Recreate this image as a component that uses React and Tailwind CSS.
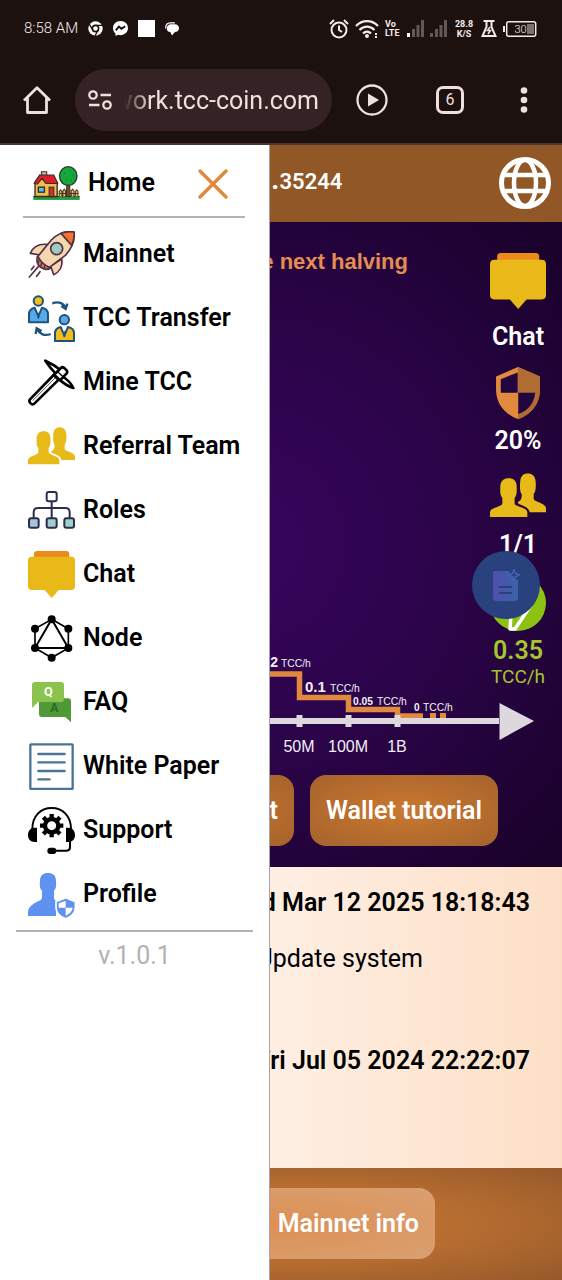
import React from "react";

function HouseIcon() {
  return (
    <svg viewBox="0 0 140 102" className="w-[47px] shrink-0" aria-hidden="true">
      <rect x="1" y="91" width="138" height="10" fill="#1f9a3c" />
      <path d="M1 91h138" stroke="#3b2a22" strokeWidth="3" />
      <path d="M78 91V76l4-5 4 5v15M89 91V74l4-5 4 5v17M114 91V74l4-5 4 5v17M126 91V76l4-5 4 5v15M76 82h60" fill="#f0c25a" stroke="#4a3425" strokeWidth="3" />
      <path d="M99 91l2-38h8l2 38z" fill="#7b4a2a" stroke="#3b2a22" strokeWidth="3" />
      <ellipse cx="105" cy="30" rx="26" ry="28" fill="#16a83a" stroke="#2b3a2b" strokeWidth="4" />
      <path d="M93 20l3 3M108 14l3 3M118 28l3 3M98 38l3 3M112 42l2 3" stroke="#0d7a2c" strokeWidth="3" />
      <path d="M6 91V48l14-20 16 20h36v43z" fill="#ecc04e" stroke="#3b2a22" strokeWidth="4" />
      <path d="M25 32V17h16v15" fill="#b8b8b8" stroke="#3b2a22" strokeWidth="3" />
      <path d="M3 52l17-25h42l12 25H38L27 37 13 54z" fill="#dc1f26" stroke="#3b2a22" strokeWidth="3" strokeLinejoin="round" />
      <rect x="16" y="63" width="18" height="15" fill="#5cb8f0" stroke="#3b2a22" strokeWidth="4" />
      <rect x="48" y="63" width="14" height="28" fill="#c93430" stroke="#3b2a22" strokeWidth="3" />
    </svg>
  );
}

function RocketIcon() {
  return (
    <svg viewBox="0 0 141 141" className="size-[47px] shrink-0" aria-hidden="true" fill="none" stroke="#55304a" strokeWidth="5" strokeLinejoin="round" strokeLinecap="round">
      <path d="M58 40C36 38 16 44 7 67l30 5z" fill="#f3d7ae" />
      <path d="M101 84c4 24-8 40-24 47l-9-26z" fill="#f3d7ae" />
      <path d="M28 76c-4 16 2 28 12 34 8 6 20 7 27 2L62 98z" fill="#cf7a4a" />
      <path d="M35 84l-6 14M43 90l-6 18M52 96l-4 18M61 102l-1 12" strokeWidth="4" />
      <path d="M138 3C112 0 88 8 70 27L30 76c6 14 18 26 34 33l48-36c20-20 29-40 26-70z" fill="#f3d7ae" />
      <path d="M138 3c-14-2-27-1-39 4l32 36c6-13 9-26 7-40z" fill="#f5742a" />
      <circle cx="86" cy="53" r="18" fill="#9ccbc2" />
      <path d="M18 106l-8 10M31 107L4 138M36 122L26 136" strokeWidth="5" />
    </svg>
  );
}

function TransferIcon() {
  return (
    <svg viewBox="0 0 141 141" className="size-[47px] shrink-0" aria-hidden="true" fill="none" stroke="#1f537d" strokeWidth="6" strokeLinejoin="round" strokeLinecap="round">
      <circle cx="31" cy="18" r="14" fill="#f3bd1c" />
      <path d="M3 82V58c0-13 8-18 17-20l11 26 11-26c10 2 18 7 18 20v24z" fill="#58a8ea" />
      <path d="M31 56v12" />
      <circle cx="109" cy="74" r="14" fill="#58a8ea" />
      <path d="M81 138v-23c0-12 7-17 17-19l11 26 11-26c11 2 18 8 18 19v23z" fill="#f3bd1c" />
      <path d="M109 112v12" />
      <path d="M73 25c18-7 34-2 40 15M100 33l13 9 5-16M68 117c-18 7-34 0-40-14M23 117l3-17 15 8" strokeWidth="7" strokeLinecap="butt" strokeLinejoin="miter" />
    </svg>
  );
}

function PickaxeIcon() {
  return (
    <svg viewBox="0 0 141 141" className="size-[47px] shrink-0" aria-hidden="true" fill="#fff" stroke="#000" strokeWidth="8" strokeLinejoin="round" strokeLinecap="round">
      <path d="M77 48L6 121c-3 4-2 8 2 12s8 4 11 1l73-72z" />
      <path d="M88 50L15 124" strokeWidth="2" />
      <path d="M52 5c18 8 34 18 47 29l-13 13C73 34 62 20 52 5zM106 54c14 9 24 20 30 33-16-5-30-14-43-27z" />
      <path d="M78 47l21-20c3-3 7-3 11 1l5 5c3 3 4 7 1 10L96 64z" />
      <path d="M90 39l16 15" strokeWidth="4" />
    </svg>
  );
}

function TeamIcon({ className }) {
  return (
    <svg viewBox="0 0 141 112" className={className} aria-hidden="true" fill="#e7ba19">
      <path d="M0 112V99c0-6 8-10 16-13 9-4 15-5 15-10V63c-5-6-6-13-5-30 1-14 9-20 21-20s20 6 20 20c1 17 0 24-5 30v13c0 5 7 6 16 10 8 3 16 7 16 13v13z" />
      <path d="M100 99c-2-11-14-16-27-21-3-1-3-3-3-5 8-4 10-9 10-19-5-7-5-17-4-32C77 7 84 1 95 1s19 6 20 21c1 15 0 24-5 31v12c0 4 6 6 14 9 9 4 17 8 17 14v11z" />
    </svg>
  );
}

function RolesIcon() {
  return (
    <svg viewBox="0 0 141 113" className="w-[47px] shrink-0" aria-hidden="true" fill="none" stroke="#2c2b52" strokeWidth="6">
      <path d="M71 31v50M17 82V64c0-9 5-13 13-13h82c8 0 13 4 13 13v18" />
      <rect x="56" y="3" width="30" height="28" rx="6" fill="#fff" />
      <rect x="3" y="82" width="29" height="28" rx="6" fill="#a5c4d2" />
      <rect x="56" y="82" width="30" height="28" rx="6" fill="#a4cdd0" />
      <rect x="109" y="82" width="29" height="28" rx="6" fill="#9fd3c2" />
    </svg>
  );
}

function ChatIcon({ className }) {
  return (
    <svg viewBox="0 0 141 141" className={className} aria-hidden="true">
      <path d="M18 24V9q0-9 9-9h88q9 0 9 9v15z" fill="#ee8a1b" />
      <path d="M11 17h119q11 0 11 11v78q0 11-11 11H92l-21 24-21-24H11q-11 0-11-11V28q0-11 11-11z" fill="#e8b918" />
    </svg>
  );
}

function NodeIcon() {
  return (
    <svg viewBox="0 0 141 141" className="size-[47px] shrink-0" aria-hidden="true" stroke="#000" strokeWidth="5" fill="none">
      <path d="M71 13l50 28v58l-50 29-50-29V41z" />
      <path d="M71 13l50 86H21z" strokeWidth="6" />
      <g fill="#000" stroke="none">
        <circle cx="71" cy="13" r="12" />
        <circle cx="21" cy="41" r="12" />
        <circle cx="121" cy="41" r="12" />
        <circle cx="21" cy="99" r="12" />
        <circle cx="121" cy="99" r="12" />
        <circle cx="71" cy="128" r="12" />
      </g>
    </svg>
  );
}

function FaqIcon() {
  return (
    <svg viewBox="0 0 141 141" className="size-[47px] shrink-0" aria-hidden="true">
      <path d="M42 58h78q9 0 9 9v63l-17-16H42q-9 0-9-9V67q0-9 9-9z" fill="#4f9a36" />
      <path d="M21 9h78q9 0 9 9v42q0 9-9 9H30L12 87V18q0-9 9-9z" fill="#8bc34e" />
      <text x="61" y="52" textAnchor="middle" fill="#fff" className="font-['Roboto',sans-serif] text-[38px] font-bold">Q</text>
      <text x="79" y="99" textAnchor="middle" fill="#2d6a28" className="font-['Roboto',sans-serif] text-[38px] font-bold">A</text>
    </svg>
  );
}

function PaperIcon() {
  return (
    <svg viewBox="0 0 141 141" className="size-[47px] shrink-0" aria-hidden="true" fill="none" stroke="#4a7494" strokeWidth="7" strokeLinecap="round">
      <rect x="7" y="4" width="127" height="134" rx="2" />
      <path d="M31 33h79M31 58h79M31 84h79M31 109h34" />
    </svg>
  );
}

function SupportIcon() {
  return (
    <svg viewBox="0 0 141 141" className="size-[47px] shrink-0" aria-hidden="true">
      <path d="M13 66C13 27 38 3 71 3s58 24 58 63M126 100v21q0 10-10 10H78" fill="none" stroke="#000" strokeWidth="6" />
      <path d="M27 62v43h-7C7 105 0 96 0 84s7-22 20-22zM114 62v43h7c13 0 20-9 20-21s-7-22-20-22z" />
      <rect x="58" y="122" width="27" height="19" rx="9" />
      <circle cx="71" cy="56" r="20" fill="none" stroke="#000" strokeWidth="13" />
      <g stroke="#000" strokeWidth="13">
        <path d="M71 21v14M71 77v14M36 56h14M92 56h14M46 31l10 10M86 71l10 10M96 31L86 41M56 71L46 81" />
      </g>
    </svg>
  );
}

function ProfileIcon() {
  return (
    <svg viewBox="0 0 141 141" className="size-[47px] shrink-0" aria-hidden="true">
      <path d="M0 135v-10c0-18 17-28 31-34 7-3 11-6 11-12V59c-7-5-7-17-6-31C37 13 46 6 60 6s23 7 24 22c1 14 1 26-6 31v20c0 5 2 9 6 11v45z" fill="#5e91f0" />
      <path d="M113 80l29 12v16c0 18-12 29-29 35-17-6-29-17-29-35V92z" fill="#5e91f0" stroke="#fff" strokeWidth="5" />
      <path d="M113 90v20H92V97zM113 110h21c-1 11-9 18-21 24z" fill="#fff" />
    </svg>
  );
}

function GlobeIcon() {
  return (
    <svg viewBox="0 0 52 52" className="size-[52px]" aria-hidden="true" fill="none" stroke="#fff" strokeWidth="4.500">
      <circle cx="26" cy="26" r="23.500" strokeWidth="5" />
      <ellipse cx="26" cy="26" rx="11" ry="23" />
      <path d="M5 18h42M5 34h42" />
    </svg>
  );
}

function ShieldIcon() {
  return (
    <svg viewBox="0 0 130 154" className="h-[52px] w-[44px]" aria-hidden="true">
      <path d="M65 0l65 28v38c0 45-28 76-65 88C28 142 0 111 0 66V28z" fill="#e0893f" />
      <path d="M65 0l65 28v38c0 45-28 76-65 88z" fill="#b06c33" />
      <path d="M64 16v60H14V36z" fill="#22053f" />
      <path d="M66 76h50c-3 32-21 52-50 63z" fill="#22053f" />
    </svg>
  );
}

function MiningIcon() {
  return (
    <svg viewBox="0 0 56 56" className="size-14" aria-hidden="true">
      <circle cx="28" cy="28" r="28" fill="#8cc211" />
      <path d="M12 30l9 10-1 14h5l16-24" fill="none" stroke="#fff" strokeWidth="3.500" strokeLinejoin="round" />
    </svg>
  );
}

function StatusBar() {
  return (
    <div className="flex h-[57px] items-center justify-between pr-[25px] pl-6 text-[#f3ebea]">
      <div className="flex items-center gap-[10px]">
        <span className="w-[54px] font-['Roboto',sans-serif] text-[15px] font-light whitespace-nowrap">8:58 AM</span>
        <svg viewBox="0 0 24 24" className="size-[15px]" aria-hidden="true">
          <circle cx="12" cy="12" r="11.500" fill="#fff" />
          <circle cx="12" cy="12" r="5" fill="#fff" stroke="#1c110f" strokeWidth="2.500" />
          <path d="M12 7h11M7.700 14.500L2 5M16.300 14.500L11 24" stroke="#1c110f" strokeWidth="2" />
        </svg>
        <svg viewBox="0 0 24 24" className="size-[15px]" aria-hidden="true">
          <path d="M12 0C5 0 0 5 0 11.500c0 3.500 1.500 6.500 4 8.500V24l4-2c1.300.4 2.600.6 4 .6 7 0 12-5 12-11.300S19 0 12 0z" fill="#fff" />
          <path d="M4.500 15l5-6 4 3.500 6-4" stroke="#1c110f" strokeWidth="3" fill="none" />
        </svg>
        <svg viewBox="0 0 17 17" className="size-[17px]" aria-hidden="true">
          <path d="M0 0h17v17H0z" fill="#fff" />
        </svg>
        <svg viewBox="0 0 24 24" className="size-[14px]" aria-hidden="true">
          <path d="M10 4h7c4 0 7 3 7 6.500S21 17 17 17l-5 6-3-6c-4 0-6-3-6-6.500S6 4 10 4z" fill="#fff" />
          <path d="M1 11C1 5 4 1.500 9 1.500h8" stroke="#fff" strokeWidth="2" fill="none" />
        </svg>
      </div>
      <div className="flex items-center gap-1.5 font-['Roboto',sans-serif] font-bold">
        <svg viewBox="0 0 20 20" className="size-5" aria-hidden="true" fill="none" stroke="currentColor" strokeWidth="2">
          <circle cx="10" cy="11" r="7.500" />
          <path d="M10 6.500V11l3 2M1 5l4-4M19 5l-4-4" />
        </svg>
        <svg viewBox="0 0 24 20" className="h-5 w-6" aria-hidden="true" fill="none" stroke="currentColor" strokeWidth="2.200">
          <path d="M1 7c6-6.500 16-6.500 22 0M4.500 11c4.500-4.500 10.500-4.500 15 0M8 14.500c2.500-2.500 5.500-2.500 8 0" />
          <circle cx="12" cy="17" r="2" fill="currentColor" stroke="none" />
          <path d="M20 14h2v2h-2zM20 17h2v2h-2z" fill="currentColor" stroke="none" />
        </svg>
        <span className="w-4 text-[9px] leading-[9px]">Vo<br />LTE</span>
        {[1, 0].map((lit) => (
          <svg key={lit} viewBox="0 0 17 17" className="size-[17px]" aria-hidden="true" fill="#625856">
            <path d="M0 13h3v4H0z" fill={lit ? "#fff" : "#625856"} />
            <path d="M5 9h3v8H5zM9.500 5h3v12h-3zM14 0h3v17h-3z" />
          </svg>
        ))}
        <span className="w-[22px] text-center text-[9px] leading-[10px]">28.8<br />K/S</span>
        <svg viewBox="0 0 16 17" className="h-[17px] w-4" aria-hidden="true" fill="none" stroke="currentColor" strokeWidth="2">
          <path d="M2.500 1h11M5.500 1v6L1.500 16h13L10.500 7V1" />
          <path d="M9 7l-2.500 3.500h3L7 14" strokeWidth="1.500" />
        </svg>
        <svg viewBox="0 0 34 18" className="h-[18px] w-[34px]" aria-hidden="true">
          <rect x="3.700" y="1.700" width="29" height="14.600" rx="2" fill="none" stroke="currentColor" strokeWidth="1.500" />
          <path d="M0 6h2v6H0z" fill="currentColor" />
          <path d="M24 4h7v10h-7z" fill="#7a7170" />
          <text x="17.500" y="13" textAnchor="middle" fill="currentColor" className="font-['Roboto',sans-serif] text-[11px] font-light">30</text>
        </svg>
      </div>
    </div>
  );
}

function Toolbar() {
  return (
    <div className="flex h-[86px] items-center pr-[26px] pl-[23px] font-['Roboto',sans-serif] text-[#efdfdd]">
      <button type="button" aria-label="Home page" className="mr-6 shrink-0">
        <svg viewBox="0 0 28 28" className="size-7" fill="none" stroke="currentColor" strokeWidth="2.800" strokeLinejoin="round" aria-hidden="true">
          <path d="M1 14.500L14 1.800l13 12.700M4.500 12v14.500h19V12" />
        </svg>
      </button>
      <div className="flex h-[62px] min-w-0 flex-1 items-center rounded-full bg-[#352224] pr-[13px] pl-[13px]">
        <svg viewBox="0 0 24 20" className="mr-3 w-6 shrink-0" fill="none" stroke="currentColor" strokeWidth="2.300" aria-hidden="true">
          <circle cx="5" cy="5" r="3.700" />
          <circle cx="19" cy="15" r="3.700" />
          <path d="M12.500 5H23M1 15h10.500" />
        </svg>
        <div className="flex min-w-0 flex-1 justify-end overflow-hidden [mask-image:linear-gradient(to_right,transparent,#000_26px)]">
          <input aria-label="Address" readOnly value="work.tcc-coin.com" className="w-[240px] shrink-0 bg-transparent pt-0.5 text-right text-[25px] outline-none" />
        </div>
      </div>
      <button type="button" aria-label="Play" className="ml-6 shrink-0">
        <svg viewBox="0 0 32 32" className="size-8" aria-hidden="true">
          <circle cx="16" cy="16" r="14.500" fill="none" stroke="currentColor" strokeWidth="2.300" />
          <path d="M12 9.500v13L23 16z" fill="currentColor" />
        </svg>
      </button>
      <button type="button" aria-label="Open tabs" className="ml-12 flex size-7 shrink-0 items-center justify-center rounded-[7px] border-3 border-[#efdfdd] text-base">6</button>
      <button type="button" aria-label="More" className="ml-12 shrink-0">
        <svg viewBox="0 0 24 28" className="h-7 w-6" fill="currentColor" aria-hidden="true">
          <circle cx="12" cy="4.500" r="3.300" />
          <circle cx="12" cy="14" r="3.300" />
          <circle cx="12" cy="23.500" r="3.300" />
        </svg>
      </button>
    </div>
  );
}

const menu = [
  ["Mainnet", <RocketIcon />],
  ["TCC Transfer", <TransferIcon />],
  ["Mine TCC", <PickaxeIcon />],
  ["Referral Team", <TeamIcon className="w-[47px] shrink-0" />],
  ["Roles", <RolesIcon />],
  ["Chat", <ChatIcon className="size-[47px] shrink-0" />],
  ["Node", <NodeIcon />],
  ["FAQ", <FaqIcon />],
  ["White Paper", <PaperIcon />],
  ["Support", <SupportIcon />],
  ["Profile", <ProfileIcon />],
];

function Drawer() {
  return (
    <nav className="absolute inset-y-0 left-0 z-20 w-[270px] border-r border-[#a8a0ac] bg-white text-[25px] leading-8 font-semibold text-black">
      <div className="mr-6 ml-[23px] flex h-[73px] items-center border-b-2 border-[#b3b3b3] pt-1.5 pr-4 pl-[10px]">
        <a href="#home" className="flex flex-1 items-center gap-2">
          <HouseIcon />
          Home
        </a>
        <button type="button" aria-label="Close menu">
          <svg viewBox="0 0 32 32" className="size-8" stroke="#e0893f" strokeWidth="3.500" strokeLinecap="round" aria-hidden="true">
            <path d="M3 3l26 26M29 3L3 29" />
          </svg>
        </button>
      </div>
      <ul className="mx-4 mt-1 border-b-2 border-[#b3b3b3] pb-1">
        {menu.map(([label, icon]) => (
          <li key={label}>
            <a href={"#" + label.toLowerCase().replace(" ", "-")} className="flex h-16 items-center gap-2 pl-3 whitespace-nowrap">
              {icon}
              {label}
            </a>
          </li>
        ))}
      </ul>
      <p className="pt-2 text-center font-normal text-[#b2b2b2]">v.1.0.1</p>
    </nav>
  );
}

function HalvingChart() {
  return (
    <svg viewBox="0 0 562 112" className="w-full" role="img" aria-label="Mining rate by halving" fontFamily="'Liberation Sans', Arial, sans-serif" fill="#f3eef6">
      <path d="M250 29h49.500v23.500h49v12h49v6.500H423" fill="none" stroke="#e0893f" strokeWidth="5.500" />
      <path d="M430 68h6v6h-6zM440 68h6v6h-6z" fill="#e0893f" />
      <g fill="#dcd8de">
        <path d="M250 73h250v6H250zM296.500 70h6v12h-6zM345.500 70h6v12h-6zM394.500 70h6v12h-6zM499.500 58v37L534 76z" />
      </g>
      <g fontSize="10.300">
        <text x="281" y="22">TCC/h</text>
        <text x="330" y="47">TCC/h</text>
        <text x="377" y="60">TCC/h</text>
        <text x="423" y="66">TCC/h</text>
      </g>
      <g fontWeight="bold">
        <text x="278" y="22" fontSize="14" textAnchor="end">2</text>
        <text x="305" y="47" fontSize="15">0.1</text>
        <text x="353" y="60" fontSize="10.300">0.05</text>
        <text x="414" y="66" fontSize="10">0</text>
      </g>
      <g fontSize="16" textAnchor="middle">
        <text x="299" y="107">50M</text>
        <text x="348" y="107">100M</text>
        <text x="397" y="107">1B</text>
      </g>
    </svg>
  );
}

function Hero() {
  return (
    <section className="relative flex h-[645px] flex-col bg-[radial-gradient(ellipse_at_45%_50%,#36055e_0%,#2b0449_45%,#190229_100%)]">
      <p className="pt-[23px] pr-[154px] text-right font-['Liberation_Sans',sans-serif] text-[22px] font-bold text-[#e58c52]">the next halving</p>
      <div className="mt-auto">
        <HalvingChart />
      </div>
      <div className="mt-[18px] mb-[21px] flex justify-end gap-4 pr-16 text-[25px] leading-8 font-semibold text-white">
        <button type="button" className="h-[71px] w-[188px] rounded-2xl bg-[radial-gradient(ellipse_at_center,#c9762f,#a5632c)] px-4 text-right">t</button>
        <button type="button" className="h-[71px] w-[188px] rounded-2xl bg-[radial-gradient(ellipse_at_center,#cb7830,#a5632c)] whitespace-nowrap">Wallet tutorial</button>
      </div>
      <div className="absolute top-[31px] right-0 flex w-[88px] flex-col items-center text-[25px] leading-8 font-semibold text-white">
        <a href="#chat" className="flex flex-col items-center gap-3">
          <ChatIcon className="size-14" />
          Chat
        </a>
        <a href="#security" className="mt-[14px] flex flex-col items-center gap-1.5">
          <ShieldIcon />
          20%
        </a>
        <a href="#team" className="mt-4 flex flex-col items-center gap-3">
          <TeamIcon className="w-14" />
          1/1
        </a>
        <a href="#mining" className="mt-[14px] flex flex-col items-center text-[#a4c52c]">
          <MiningIcon />
          <span className="mt-1 leading-8">0.35</span>
          <span className="text-[19px] leading-5 font-normal">TCC/h</span>
        </a>
      </div>
      <button type="button" aria-label="Summarize page" className="absolute top-[329px] right-[22px] flex size-[68px] items-center justify-center rounded-full bg-[#29427d]">
        <svg viewBox="0 0 28 32" className="h-8 w-7" aria-hidden="true">
          <defs>
            <linearGradient id="doc" x1="0" x2="1">
              <stop offset="0" stopColor="#504fae" />
              <stop offset="1" stopColor="#3d62a8" />
            </linearGradient>
          </defs>
          <path d="M3 2h14c0 5 3 8 9 9v18q0 3-3 3H4q-3 0-3-3V4q0-2 2-2z" fill="url(#doc)" />
          <path d="M22 1l1.500 3.500L27 6l-3.500 1.500L22 11l-1.500-3.500L17 6l3.500-1.500z" fill="none" stroke="#4366b4" strokeWidth="1.500" />
          <path d="M7 18h13M7 24h13" stroke="#29427d" strokeWidth="2" />
        </svg>
      </button>
    </section>
  );
}

export default function App() {
  return (
    <div className="flex min-h-screen flex-col font-['Roboto',sans-serif]">
      <header className="border-b-2 border-[#4b362d] bg-[#1c110f]">
        <StatusBar />
        <Toolbar />
      </header>
      <div className="relative flex flex-1 flex-col">
        <Drawer />
        <div className="flex h-[77px] items-start justify-between bg-[#925726] pt-3 pr-[11px] pl-[271px]">
          <p className="pt-1 font-semibold text-white">
            <span className="text-3xl">.</span>
            <span className="text-[22px]">35244</span>
          </p>
          <button type="button" aria-label="Language">
            <GlobeIcon />
          </button>
        </div>
        <Hero />
        <section className="h-[301px] bg-[linear-gradient(to_right,#fff8f3,#feeee2_50%,#fddfc6)] pt-5 pr-8 text-[25px] leading-8 text-black">
          <h2 className="text-right font-semibold">Wed Mar 12 2025 18:18:43</h2>
          <p className="mt-6 pr-[107px] text-right">Update system</p>
          <h2 className="mt-[70px] text-right font-semibold">Fri Jul 05 2024 22:22:07</h2>
        </section>
        <footer className="flex flex-1 items-start justify-center bg-[radial-gradient(ellipse_at_center,#c87730,#b56c30_50%,#96592a)] pt-5 pb-5">
          <button type="button" className="h-[71px] w-[308px] rounded-2xl bg-[radial-gradient(ellipse_at_center,#dd9054,#d9a072)] px-4 text-right text-[25px] leading-8 font-semibold text-white">Mainnet info</button>
        </footer>
      </div>
    </div>
  );
}
